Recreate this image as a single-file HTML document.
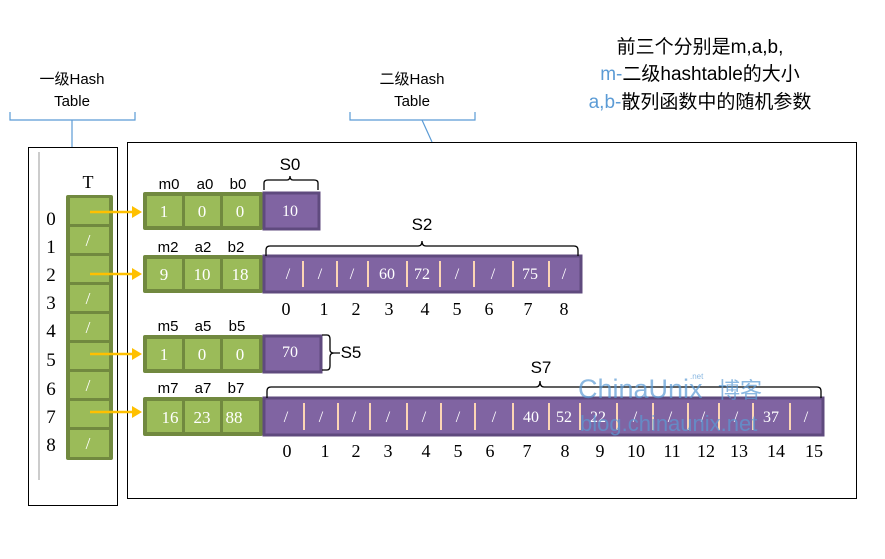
<!DOCTYPE html>
<html><head><meta charset="utf-8"><style>
html,body{margin:0;padding:0;background:#fff;width:885px;height:559px;overflow:hidden}
svg{display:block}
.t{font-family:"Liberation Sans","Noto Sans CJK SC",sans-serif}
.s{font-family:"Liberation Serif",serif}
</style></head><body>
<svg width="885" height="559" xmlns="http://www.w3.org/2000/svg">
<g class="t" font-size="15" fill="#000" text-anchor="middle">
<text x="72" y="84">一级Hash</text><text x="72" y="106">Table</text>
<text x="412" y="84">二级Hash</text><text x="412" y="106">Table</text>
</g>
<g stroke="#5b9bd5" stroke-width="1.2" fill="none">
<path d="M10 112 V120 H135 V112"/><path d="M72 120 V147"/>
<path d="M350 112 V120 H475 V112"/><path d="M422 120 L432 142"/>
</g>
<g class="t" font-size="19" text-anchor="middle">
<text x="700" y="53">前三个分别是m,a,b,</text>
<text x="700" y="80"><tspan fill="#5b9bd5">m-</tspan>二级hashtable的大小</text>
<text x="700" y="108"><tspan fill="#5b9bd5">a,b-</tspan>散列函数中的随机参数</text>
</g>
<rect x="28.5" y="147.5" width="89" height="358" fill="none" stroke="#000"/>
<line x1="39" y1="152" x2="39" y2="480" stroke="#ccc" stroke-width="2"/>
<rect x="127.5" y="142.5" width="729" height="356" fill="none" stroke="#000"/>
<text x="88" y="188" class="s" font-size="18" text-anchor="middle">T</text>
<rect x="66" y="195" width="47" height="265" rx="2" fill="#71893f"/>
<g fill="#9bbb59">
<rect x="70" y="198" width="39" height="26"/><rect x="70" y="227" width="39" height="26"/>
<rect x="70" y="256" width="39" height="26"/><rect x="70" y="285" width="39" height="26"/>
<rect x="70" y="314" width="39" height="26"/><rect x="70" y="343" width="39" height="26"/>
<rect x="70" y="372" width="39" height="26"/><rect x="70" y="401" width="39" height="26"/>
<rect x="70" y="430" width="39" height="27"/>
</g>
<g class="s" font-size="17" fill="#fff" text-anchor="middle">
<text x="88" y="246">/</text><text x="88" y="304">/</text><text x="88" y="333">/</text>
<text x="88" y="391">/</text><text x="88" y="449">/</text>
</g>
<g class="s" font-size="19" fill="#000" text-anchor="middle">
<text x="51" y="225">0</text><text x="51" y="253">1</text><text x="51" y="281">2</text>
<text x="51" y="309">3</text><text x="51" y="337">4</text><text x="51" y="366">5</text>
<text x="51" y="395">6</text><text x="51" y="423">7</text><text x="51" y="451">8</text>
</g>
<g stroke="#ffc000" stroke-width="2.5" fill="#ffc000">
<line x1="90" y1="212" x2="133" y2="212"/><path d="M132 206 L142 212 L132 218Z" stroke="none"/>
<line x1="90" y1="274" x2="133" y2="274"/><path d="M132 268 L142 274 L132 280Z" stroke="none"/>
<line x1="90" y1="354" x2="133" y2="354"/><path d="M132 348 L142 354 L132 360Z" stroke="none"/>
<line x1="90" y1="412" x2="133" y2="412"/><path d="M132 406 L142 412 L132 418Z" stroke="none"/>
</g>
<g>
<rect x="143" y="192" width="120" height="38" rx="2" fill="#71893f"/>
<rect x="143" y="255" width="120" height="38" rx="2" fill="#71893f"/>
<rect x="143" y="335" width="120" height="38" rx="2" fill="#71893f"/>
<rect x="143" y="397" width="120" height="39" rx="2" fill="#71893f"/>
</g>
<g fill="#9bbb59">
<rect x="147" y="196" width="35" height="30"/><rect x="185" y="196" width="35" height="30"/><rect x="223" y="196" width="36" height="30"/>
<rect x="147" y="259" width="35" height="30"/><rect x="185" y="259" width="35" height="30"/><rect x="223" y="259" width="36" height="30"/>
<rect x="147" y="339" width="35" height="30"/><rect x="185" y="339" width="35" height="30"/><rect x="223" y="339" width="36" height="30"/>
<rect x="147" y="401" width="35" height="31"/><rect x="185" y="401" width="35" height="31"/><rect x="223" y="401" width="36" height="31"/>
</g>
<g class="s" font-size="17" fill="#fff" text-anchor="middle">
<text x="164" y="217">1</text><text x="202" y="217">0</text><text x="240" y="217">0</text>
<text x="164" y="280">9</text><text x="202" y="280">10</text><text x="240" y="280">18</text>
<text x="164" y="360">1</text><text x="202" y="360">0</text><text x="240" y="360">0</text>
<text x="170" y="423">16</text><text x="202" y="423">23</text><text x="234" y="423">88</text>
</g>
<g class="t" font-size="15" fill="#000" text-anchor="middle">
<text x="169" y="189">m0</text><text x="205" y="189">a0</text><text x="238" y="189">b0</text>
<text x="168" y="252">m2</text><text x="203" y="252">a2</text><text x="236" y="252">b2</text>
<text x="168" y="331">m5</text><text x="203" y="331">a5</text><text x="237" y="331">b5</text>
<text x="168" y="393">m7</text><text x="203" y="393">a7</text><text x="236" y="393">b7</text>
</g>
<g fill="#8064a2" stroke="#5f4a7e" stroke-width="3">
<rect x="264" y="193" width="55" height="36"/>
<rect x="264" y="256" width="317" height="36"/>
<rect x="264" y="336" width="57" height="36"/>
<rect x="264" y="398" width="559" height="37"/>
</g>
<g stroke="#fcd5b4" stroke-width="2">
<path d="M303 261V287M337 261V287M368 261V287M407 261V287M440 261V287M474 261V287M513 261V287M549 261V287"/>
<path d="M304 403V430M338 403V430M370 403V430M407 403V430M441 403V430M475 403V430M513 403V430M549 403V430M580 403V430M617 403V430M653 403V430M688 403V430M719 403V430M753 403V430M790 403V430"/>
</g>
<g class="s" font-size="16" fill="#fff" text-anchor="middle">
<text x="290" y="216">10</text><text x="290" y="357">70</text>
<text x="288" y="279">/</text><text x="320" y="279">/</text><text x="352" y="279">/</text><text x="387" y="279">60</text><text x="422" y="279">72</text><text x="457" y="279">/</text><text x="493" y="279">/</text><text x="530" y="279">75</text><text x="564" y="279">/</text>
<text x="286" y="422">/</text><text x="321" y="422">/</text><text x="354" y="422">/</text><text x="388" y="422">/</text><text x="424" y="422">/</text><text x="458" y="422">/</text><text x="494" y="422">/</text><text x="531" y="422">40</text><text x="564" y="422">52</text><text x="598" y="422">22</text><text x="635" y="422">/</text><text x="670" y="422">/</text><text x="703" y="422">/</text><text x="736" y="422">/</text><text x="771" y="422">37</text><text x="806" y="422">/</text>
</g>
<g class="s" font-size="18" fill="#000" text-anchor="middle">
<text x="286" y="315">0</text><text x="324" y="315">1</text><text x="356" y="315">2</text><text x="389" y="315">3</text><text x="425" y="315">4</text><text x="457" y="315">5</text><text x="489" y="315">6</text><text x="528" y="315">7</text><text x="564" y="315">8</text>
<text x="287" y="457">0</text><text x="325" y="457">1</text><text x="356" y="457">2</text><text x="388" y="457">3</text><text x="426" y="457">4</text><text x="458" y="457">5</text><text x="490" y="457">6</text><text x="527" y="457">7</text><text x="565" y="457">8</text><text x="600" y="457">9</text><text x="636" y="457">10</text><text x="672" y="457">11</text><text x="706" y="457">12</text><text x="739" y="457">13</text><text x="776" y="457">14</text><text x="814" y="457">15</text>
</g>
<g stroke="#000" stroke-width="1.3" fill="none">
<path d="M264 190 V183 Q264 180 268 180 H287 Q290 180 290 176 Q290 180 293 180 H314 Q318 180 318 183 V190"/>
<path d="M266 256 V250 Q266 246 270 246 H418 Q422 246 422 241 Q422 246 426 246 H574 Q578 246 578 250 V256"/>
<path d="M322 335 H327 Q330 335 330 339 V350 Q330 353 334 353 H340 M334 353 Q330 353 330 357 V366 Q330 370 327 370 H322"/>
<path d="M267 398 V391 Q267 387 271 387 H536 Q540 387 540 381 Q540 387 544 387 H817 Q821 387 821 391 V398"/>
</g>
<g class="t" font-size="17" fill="#000" text-anchor="middle">
<text x="290" y="170">S0</text><text x="422" y="230">S2</text><text x="351" y="358">S5</text><text x="541" y="373">S7</text>
</g>
<g class="t" fill="#5b9bd5" opacity="0.7">
<text x="578" y="398" font-size="27">ChinaUnix</text>
<text x="718" y="398" font-size="22">博客</text>
<text x="690" y="379" font-size="8">.net</text>
<text x="580" y="431" font-size="22">blog.chinaunix.net</text>
</g>
</svg>
</body></html>
